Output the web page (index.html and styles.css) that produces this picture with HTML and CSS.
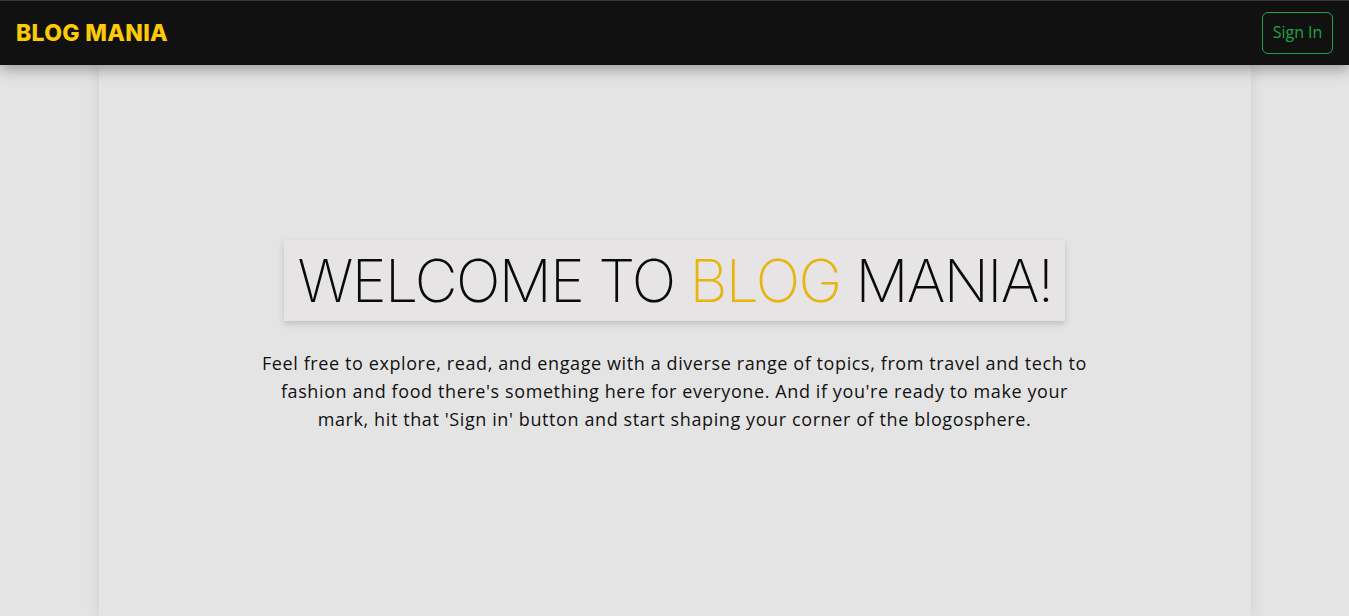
FILE: index.html
```html
<!DOCTYPE html>
<html lang="en">
<head>
<meta charset="utf-8">
<title>Blog Mania</title>
<link rel="stylesheet" href="styles.css">
</head>
<body>
<header class="navbar">
  <a class="brand" href="#">BLOG MANIA</a>
  <button class="signin">Sign In</button>
</header>
<main class="page">
  <section class="hero">
    <h1 class="hero-title">WELCOME TO <span class="accent">BLOG</span> MANIA!</h1>
    <p class="hero-text">Feel free to explore, read, and engage with a diverse range of topics, from travel and tech to<br>fashion and food there's something here for everyone. And if you're ready to make your<br>mark, hit that 'Sign in' button and start shaping your corner of the blogosphere.</p>
  </section>
</main>
</body>
</html>
```
FILE: styles.css
```css
* { box-sizing: border-box; }
html, body { height: 100%; }
body {
  margin: 0;
  background: #e5e4e5;
  font-family: "Open Sans", "Noto Sans", sans-serif;
  color: #111;
  overflow: hidden;
}
.navbar {
  position: relative;
  z-index: 2;
  height: 65px;
  background: #111111;
  border-top: 1px solid #3a3a3a;
  display: flex;
  align-items: center;
  justify-content: space-between;
  padding: 0 16px;
  box-shadow: 0 4px 14px rgba(0,0,0,0.35);
}
.brand {
  font-family: "Inter", sans-serif;
  font-weight: 800;
  font-size: 23px;
  color: #fccb06;
  text-decoration: none;
  letter-spacing: 0.3px;
}
.signin {
  font-family: "Open Sans", sans-serif;
  font-size: 16px;
  font-weight: 400;
  color: #1ea446;
  background: transparent;
  border: 1px solid #1ea446;
  border-radius: 6px;
  height: 42px;
  width: 71px;
  padding: 0 0 2px;
  margin-top: -1px;
}
.page {
  width: 1152px;
  margin: 0 auto;
  min-height: calc(100% - 65px);
  background: #e5e4e5;
  box-shadow: 0 0 14px rgba(0,0,0,0.10);
  padding-top: 175px;
  display: flex;
  justify-content: center;
}
.hero {
  display: flex;
  flex-direction: column;
  align-items: center;
}
.hero-title {
  margin: 0;
  height: 81px;
  padding: 0 12px 0 13px;
  font-family: "Inter", sans-serif;
  font-weight: 200;
  font-size: 59px;
  letter-spacing: -1.65px;
  line-height: 81px;
  color: #0a0a0a;
  background: #e6e4e5;
  box-shadow: 0 3px 6px rgba(0,0,0,0.16);
  white-space: nowrap;
}
.accent { color: #e9b410; }
.hero-text {
  margin: 28px 0 0;
  text-align: center;
  font-size: 18px;
  letter-spacing: 0.6px;
  line-height: 28px;
  color: #111;
  white-space: nowrap;
}
```
